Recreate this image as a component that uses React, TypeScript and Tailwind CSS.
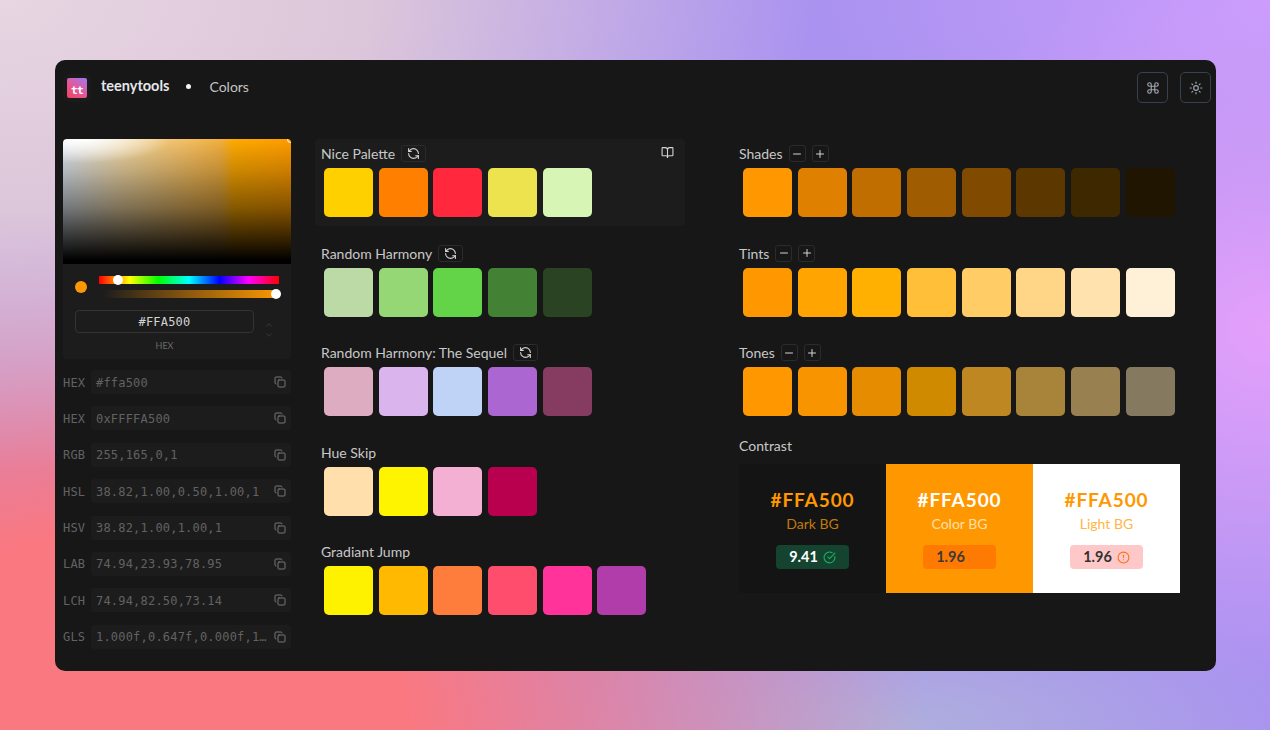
import { BookOpen, ChevronDown, ChevronUp, CircleAlert, CircleCheckBig, Command, Copy, Minus, Plus, RefreshCcw, Sun } from "lucide-react";

const codes = [
  ["HEX", "#ffa500"],
  ["HEX", "0xFFFFA500"],
  ["RGB", "255,165,0,1"],
  ["HSL", "38.82,1.00,0.50,1.00,1"],
  ["HSV", "38.82,1.00,1.00,1"],
  ["LAB", "74.94,23.93,78.95"],
  ["LCH", "74.94,82.50,73.14"],
  ["GLS", "1.000f,0.647f,0.000f,1…"],
];

const palettes = [
  { title: "Nice Palette", refresh: true, book: true, colors: ["#ffd000", "#ff8000", "#ff283c", "#ece34f", "#d7f5b5"] },
  { title: "Random Harmony", refresh: true, colors: ["#bcdaa6", "#95d775", "#63d347", "#438234", "#2a4423"] },
  { title: "Random Harmony: The Sequel", refresh: true, colors: ["#deacc1", "#dab4ec", "#bfd3f6", "#ab66d1", "#853c60"] },
  { title: "Hue Skip", colors: ["#ffe0ac", "#fff400", "#f3b0d3", "#b8004f"] },
  { title: "Gradiant Jump", colors: ["#fff200", "#ffb900", "#ff7d3c", "#ff4d6e", "#ff3399", "#b03daa"] },
];

const scales = [
  { title: "Shades", colors: ["#ff9800", "#e08000", "#c06e00", "#a05c00", "#804a00", "#5c3800", "#3d2800", "#1f1500"] },
  { title: "Tints", colors: ["#ff9800", "#ffa400", "#ffb000", "#ffbf38", "#ffcc66", "#ffd688", "#ffe2ae", "#fff1d8"] },
  { title: "Tones", colors: ["#ff9800", "#f89400", "#e58c00", "#cf8a00", "#bf8722", "#a8833a", "#988050", "#857a60"] },
];

function Swatches({ colors }: { colors: string[] }) {
  return (
    <div className="flex gap-[5.67px] pl-[9px] pt-[5px]">
      {colors.map((c, i) => (
        <div key={i} className="h-[49px] w-[49px] rounded-[5px]" style={{ backgroundColor: c }} />
      ))}
    </div>
  );
}

function SmallButton({ children }: { children: React.ReactNode }) {
  return (
    <span className="flex h-[17px] items-center justify-center rounded-[3px] border border-[#2b2b2b] text-[#d4d4d4]">
      {children}
    </span>
  );
}

function Contrast({ bg, title, label, labelColor, chipBg, chipText, value, icon }: {
  bg: string; title: string; label: string; labelColor: string; chipBg: string; chipText: string; value: string; icon: React.ReactNode;
}) {
  return (
    <div className={`flex w-[147px] flex-col items-center pt-[24px] ${bg}`}>
      <div className={`text-[19px] font-bold leading-[24px] tracking-[0.9px] ${title}`}>#FFA500</div>
      <div className={`mt-[1px] text-[14px] leading-[22px] ${labelColor}`}>{label}</div>
      <div className={`mt-[10px] flex h-[24px] w-[73px] items-center justify-center gap-[5px] rounded-[4px] text-[14.5px] font-bold ${chipBg} ${chipText}`}>
        {value}
        {icon}
      </div>
    </div>
  );
}

export default function App() {
  return (
    <div className="h-[730px] w-[1270px] overflow-hidden bg-[#a992f0] bg-[radial-gradient(ellipse_820px_470px_at_0%_0%,#e8d6e2_0%,#dcc6da_45%,rgba(214,194,218,0)_100%),radial-gradient(ellipse_800px_560px_at_10%_100%,#fa7880_0%,#fa7880_35%,rgba(250,120,128,0)_100%),radial-gradient(ellipse_420px_150px_at_70%_100%,#aeb0dc_0%,rgba(174,176,220,0)_100%),radial-gradient(ellipse_420px_360px_at_100%_45%,#e4a0fb_0%,rgba(228,160,251,0)_100%),radial-gradient(ellipse_460px_200px_at_100%_0%,#c99cfc_0%,rgba(201,156,252,0)_100%)] pl-[55px] pt-[60px] font-['Lato',sans-serif]">
      <div className="h-[611px] w-[1161px] rounded-[10px] bg-[#171717]">
        {/* Barra superior */}
        <header className="flex h-[79px] items-start justify-between pl-[8px] pr-[5px] pt-[12px]">
          <div className="flex h-[28px] items-center">
            <div className="mt-[4px] flex h-[28px] w-[28px] items-center justify-center rounded-[5px] bg-[#1a1a1a]">
              <div className="flex h-[20px] w-[20px] items-end justify-center rounded-[2px] bg-[linear-gradient(35deg,#f0435a_0%,#e2599c_50%,#9a7bf5_100%)] font-['DejaVu_Sans_Mono',monospace] text-[11px] font-bold leading-[15px] tracking-[-0.5px] text-white">
                tt
              </div>
            </div>
            <span className="ml-[10px] text-[14.5px] font-bold text-[#e5e7eb]">teenytools</span>
            <span className="ml-[17px] h-[5px] w-[5px] rounded-full bg-[#f3f4f6]" />
            <span className="ml-[18px] text-[14px] text-[#c4c4c4]">Colors</span>
          </div>
          <div className="flex gap-[12px]">
            <button className="flex h-[31px] w-[31px] items-center justify-center rounded-[5px] border border-[#374151] text-[#9ca3af]">
              <Command size={14} />
            </button>
            <button className="flex h-[31px] w-[31px] items-center justify-center rounded-[5px] border border-[#374151] text-[#9ca3af]">
              <Sun size={14} />
            </button>
          </div>
        </header>

        <main className="flex pl-[8px]">
          {/* Coluna do seletor */}
          <div className="w-[228px]">
            <div className="h-[220px] rounded-[4px] bg-[#1c1c1c]">
              <div className="relative h-[125px] overflow-hidden rounded-t-[4px] bg-[radial-gradient(ellipse_90px_24px_at_8%_0%,#ffffff_0%,rgba(255,255,255,0)_100%),linear-gradient(to_bottom,rgba(0,0,0,0)_0%,rgba(0,0,0,0.2)_25%,rgba(0,0,0,0.48)_55%,rgba(0,0,0,0.85)_85%,#000_97%),linear-gradient(to_right,#dfe8f2_0%,#f2d8a4_26%,#f4be60_55%,#f2b040_69%,#ffaa00_75%,#ff9c00_100%)]">
                <span className="absolute right-[-3px] top-[-3px] h-[7px] w-[7px] rounded-full border border-white bg-[#ffa500]" />
              </div>
              <div className="relative h-[95px]">
                <span className="absolute left-[12px] top-[17px] h-[12px] w-[12px] rounded-full bg-[#ff9800]" />
                <div className="absolute left-[36px] top-[12px] h-[8px] w-[180px] bg-[linear-gradient(to_right,#ff0000_0%,#ffff00_17%,#00ff00_33%,#00ffff_50%,#0000ff_67%,#ff00ff_83%,#ff0000_100%)]">
                  <span className="absolute left-[14px] top-[-1px] h-[10px] w-[10px] rounded-full bg-white" />
                </div>
                <div className="absolute left-[40px] top-[26px] h-[8px] w-[176px] bg-[linear-gradient(to_right,#1c1c1c_0%,#ff9800_100%)]">
                  <span className="absolute right-[-2px] top-[-1px] h-[10px] w-[10px] rounded-full bg-white" />
                </div>
                <div className="absolute left-[12px] top-[46px] flex h-[23px] w-[179px] items-center justify-center rounded-[4px] border border-[#333] font-['DejaVu_Sans_Mono',monospace] text-[12px] tracking-[0.2px] text-[#d4d4d4]">
                  #FFA500
                </div>
                <div className="absolute left-[201px] top-[56px] flex flex-col text-[#3f3f3f]">
                  <ChevronUp size={10} />
                  <ChevronDown size={10} />
                </div>
                <div className="absolute left-[12px] top-[76px] w-[179px] text-center text-[9px] leading-[12px] text-[#6b6b6b]">HEX</div>
              </div>
            </div>

            <div className="mt-[11px] flex flex-col gap-[12.4px]">
              {codes.map(([label, value], i) => (
                <div key={i} className="flex h-[24px] items-center font-['DejaVu_Sans_Mono',monospace] text-[12px] tracking-[0.2px] text-[#626262]">
                  <span className="w-[28px] pt-[1px]">{label}</span>
                  <div className="flex h-[24px] w-[200px] items-center rounded-[3px] bg-[#1c1c1c] pl-[5px] pr-[5px]">
                    <span className="min-w-0 flex-1 whitespace-nowrap pt-[1px]">{value}</span>
                    <Copy size={12} className="shrink-0 text-[#777]" />
                  </div>
                </div>
              ))}
            </div>
          </div>

          {/* Coluna das paletas */}
          <div className="ml-[24px] flex w-[370px] flex-col gap-[12.5px]">
            {palettes.map((p) => (
              <section key={p.title} className={`relative h-[87px] rounded-[4px] pt-[5px] ${p.book ? "bg-[#1c1c1c]" : ""}`}>
                <div className="flex h-[19px] items-center pl-[6px]">
                  <span className="text-[14px] text-[#c8c8c8]">{p.title}</span>
                  {p.refresh && (
                    <span className="ml-[6px]">
                      <SmallButton>
                        <span className="flex w-[23px] justify-center"><RefreshCcw size={13} /></span>
                      </SmallButton>
                    </span>
                  )}
                </div>
                {p.book && <BookOpen size={13} className="absolute right-[11px] top-[7px] text-[#d4d4d4]" />}
                <Swatches colors={p.colors} />
              </section>
            ))}
          </div>

          {/* Coluna das escalas e contraste */}
          <div className="ml-[54px] w-[441px]">
            <div className="flex flex-col gap-[12.5px]">
              {scales.map((s) => (
                <section key={s.title} className="h-[87px] pt-[5px]">
                  <div className="flex h-[19px] items-center">
                    <span className="text-[14px] text-[#c8c8c8]">{s.title}</span>
                    <span className="ml-[6px] flex gap-[6px]">
                      <SmallButton><span className="flex w-[15px] justify-center"><Minus size={12} /></span></SmallButton>
                      <SmallButton><span className="flex w-[15px] justify-center"><Plus size={12} /></span></SmallButton>
                    </span>
                  </div>
                  <div className="-ml-[5px]"><Swatches colors={s.colors} /></div>
                </section>
              ))}
            </div>
            <div className="mt-[11px] h-[19px] text-[14px] leading-[19px] text-[#c8c8c8]">Contrast</div>
            <div className="mt-[9px] flex h-[129px] w-[441px]">
              <Contrast
                bg="bg-[#141414]"
                title="text-[#ff9800]"
                label="Dark BG"
                labelColor="text-[#c27a0a]"
                chipBg="bg-[#14432f]"
                chipText="text-white"
                value="9.41"
                icon={<CircleCheckBig size={13} className="text-[#16b364]" />}
              />
              <Contrast
                bg="bg-[#ff9800]"
                title="text-white"
                label="Color BG"
                labelColor="text-[#ffe0ad]"
                chipBg="bg-[#ff7a00]"
                chipText="text-[#3a3a3a]"
                value="1.96"
                icon={<CircleAlert size={13} className="text-[#f97a10]" />}
              />
              <Contrast
                bg="bg-white"
                title="text-[#ff9800]"
                label="Light BG"
                labelColor="text-[#ffb547]"
                chipBg="bg-[#fec8c8]"
                chipText="text-[#333]"
                value="1.96"
                icon={<CircleAlert size={13} className="text-[#f97316]" />}
              />
            </div>
          </div>
        </main>
      </div>
    </div>
  );
}
